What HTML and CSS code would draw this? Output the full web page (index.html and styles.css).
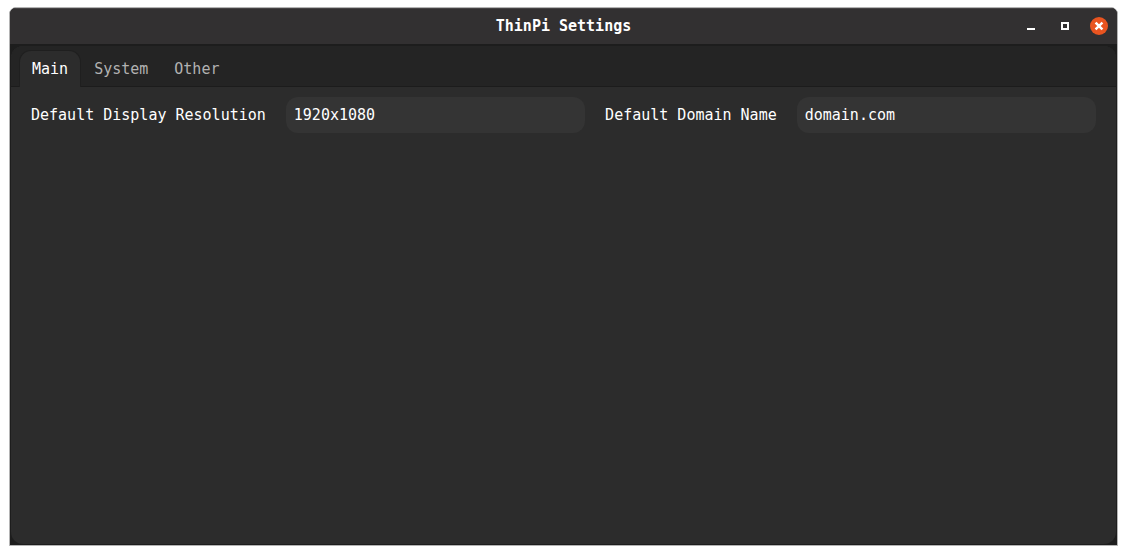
FILE: index.html
```html
<!DOCTYPE html>
<html lang="en">
<head>
<meta charset="utf-8">
<title>ThinPi Settings</title>
<link rel="stylesheet" href="styles.css">
</head>
<body>
<div class="window">
  <header class="titlebar">
    <h1 class="title">ThinPi Settings</h1>
    <div class="controls">
      <button class="control" type="button" aria-label="Minimize">
        <svg width="18" height="18" viewBox="0 0 18 18"><path d="M5 11h8v2H5z" fill="#fff"/></svg>
      </button>
      <button class="control" type="button" aria-label="Maximize">
        <svg width="18" height="18" viewBox="0 0 18 18"><path d="M6 6h6v6H6z" fill="none" stroke="#fff" stroke-width="2"/></svg>
      </button>
      <button class="control close" type="button" aria-label="Close">
        <svg width="18" height="18" viewBox="0 0 18 18"><path d="M6.4 6.4l5.2 5.2M11.6 6.4l-5.2 5.2" fill="none" stroke="#fff" stroke-width="2.4" stroke-linecap="square"/></svg>
      </button>
    </div>
  </header>
  <div class="frame">
    <main class="notebook">
      <div class="tabs" role="tablist">
        <button class="tab active" type="button" role="tab" aria-selected="true">Main</button>
        <button class="tab" type="button" role="tab" aria-selected="false">System</button>
        <button class="tab" type="button" role="tab" aria-selected="false">Other</button>
      </div>
      <form class="fields">
        <label for="resolution">Default Display Resolution</label>
        <input id="resolution" type="text" value="1920x1080">
        <label for="domain">Default Domain Name</label>
        <input id="domain" type="text" value="domain.com">
      </form>
    </main>
  </div>
</div>
</body>
</html>
```
FILE: styles.css
```css
* {
  box-sizing: border-box;
}

body {
  margin: 0;
  padding: 7px 9px 9px;
  min-height: 100vh;
  display: flex;
  background: #fff;
  color: #fff;
  font: 15px/18px "DejaVu Sans Mono", monospace;
}

button,
input {
  margin: 0;
  border: 0;
  font: inherit;
  color: inherit;
}

.window {
  flex: 1;
  display: flex;
  flex-direction: column;
  border: 1px solid #b4b4b4;
  border-radius: 7px 7px 0 0;
  background: #1d1d1d;
  overflow: hidden;
}

.titlebar {
  display: grid;
  grid-template-columns: 1fr auto 1fr;
  align-items: center;
  height: 36px;
  padding: 0 9px;
  background: #323031;
  box-shadow: inset 0 1px #454344;
}

.title {
  grid-column: 2;
  margin: 0;
  font-size: 15px;
  font-weight: 700;
}

.controls {
  display: flex;
  justify-content: flex-end;
  gap: 16px;
}

.control {
  display: flex;
  width: 18px;
  height: 18px;
  padding: 0;
  border-radius: 50%;
  background: none;
}

.close {
  background: #e95420;
}

.frame {
  flex: 1;
  display: flex;
  padding: 2px 1px 1px;
}

.notebook {
  flex: 1;
  border-radius: 12px;
  background: #2c2c2c;
  overflow: hidden;
}

.tabs {
  display: flex;
  height: 41px;
  padding: 4px 8px 0;
  border-bottom: 1px solid #1c1c1c;
  background: #242424;
}

.tab {
  height: 37px;
  padding: 0 12px;
  border: 1px solid transparent;
  border-bottom: 0;
  border-radius: 12px 12px 0 0;
  background: none;
  color: #b2b2b2;
}

.tab.active {
  border-color: #1f1f1f;
  background: #2c2c2c;
  color: #fff;
}

.fields {
  display: flex;
  align-items: center;
  gap: 20px;
  padding: 10px 20px;
}

.fields input {
  flex: 1;
  min-width: 0;
  height: 36px;
  padding: 0 8px;
  border-radius: 12px;
  background: #343434;
}
```
